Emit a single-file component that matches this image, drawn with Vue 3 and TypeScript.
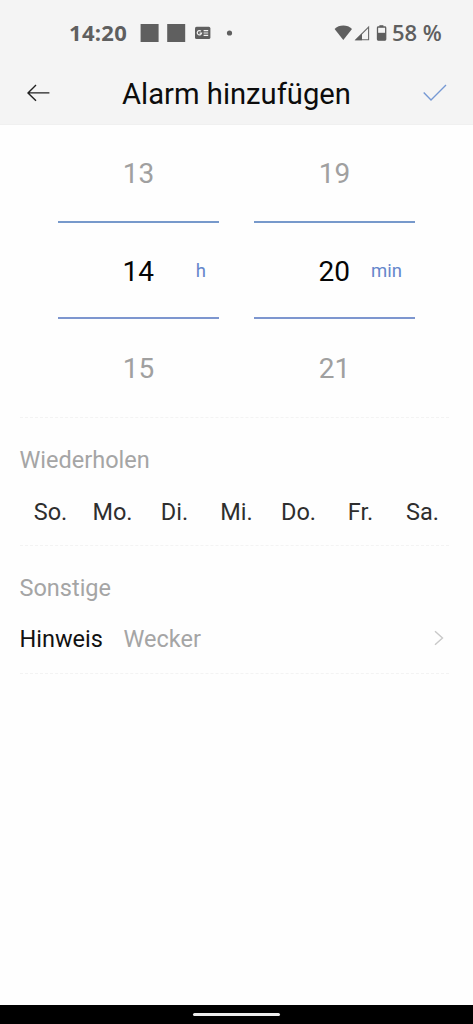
<script setup lang="ts">
interface Wheel {
  before: string
  value: string
  after: string
  unit: string
  id: string
}

const wheels: Wheel[] = [
  { id: 'hours', before: '13', value: '14', after: '15', unit: 'h' },
  { id: 'minutes', before: '19', value: '20', after: '21', unit: 'min' },
]
const days: string[] = ['So.', 'Mo.', 'Di.', 'Mi.', 'Do.', 'Fr.', 'Sa.']
</script>

<template>
  <div class="screen">
    <div class="status">
      <span class="clock">14:20</span>
      <svg class="notices" width="94" height="20" viewBox="0 0 94 20">
        <path d="M0.6 1.9h18v18h-18zM27.2 1.9h18v18h-18z" fill="#5f5f5f" />
        <rect x="55" y="4.8" width="15.4" height="12.2" rx="1.6" fill="#5f5f5f" />
        <path d="M61 9.2a2.2 2.2 0 1 0 .6 2h-2M63.6 8.6h4.6M63.6 11h4.6M63.6 13.4h4.6" fill="none" stroke="#f4f4f4" stroke-width="1.2" />
        <circle cx="89.5" cy="11" r="2.6" fill="#5f5f5f" />
      </svg>
      <svg class="signals" width="54" height="20" viewBox="0 0 54 20">
        <path d="M0.6 7C5 2.4 13.6 2.4 18 7L9.3 18z" fill="#5f5f5f" />
        <path d="M21.8 17.8L34.6 5V17.8z" fill="none" stroke="#6a6a6a" stroke-width="1.1" />
        <path d="M21 18.2L28 11.4V18.2z" fill="#5f5f5f" />
        <path d="M45.4 3.2h4v2h-4z" fill="#5f5f5f" />
        <rect x="43.5" y="5" width="8.2" height="13" rx=".8" fill="none" stroke="#5f5f5f" stroke-width="1.3" />
        <path d="M43.4 10.8h8.4v7.4h-8.4z" fill="#5f5f5f" />
      </svg>
      <span class="charge">58 %</span>
    </div>

    <header class="bar">
      <svg width="24" height="20" viewBox="0 0 24 20">
        <path d="M10 2L2 9.9L10 17.8M2 9.9H23.4" fill="none" stroke="#202020" stroke-width="1.4" />
      </svg>
      <h1>Alarm hinzufügen</h1>
      <svg width="24" height="20" viewBox="0 0 24 20">
        <path d="M.7 9.6L8 17L23 2" fill="none" stroke="#7699d4" stroke-width="1.4" />
      </svg>
    </header>

    <section class="picker">
      <div v-for="wheel in wheels" :key="wheel.id" class="wheel">
        <div class="faded">{{ wheel.before }}</div>
        <div class="selected">
          <span class="value">{{ wheel.value }}</span>
          <span class="unit">{{ wheel.unit }}</span>
        </div>
        <div class="faded last">{{ wheel.after }}</div>
      </div>
    </section>

    <section class="group repeat">
      <h2>Wiederholen</h2>
      <div class="days">
        <span v-for="day in days" :key="day">{{ day }}</span>
      </div>
    </section>

    <section class="group other">
      <h2>Sonstige</h2>
      <div class="note">
        <span class="label">Hinweis</span>
        <span class="text">Wecker</span>
        <svg width="10" height="16" viewBox="0 0 10 16">
          <path d="M1 1.2L8.5 8L1 14.8" fill="none" stroke="#c8c8c8" stroke-width="1.4" />
        </svg>
      </div>
    </section>

    <footer><i class="handle"></i></footer>
  </div>
</template>

<style>
body {
  margin: 0;
}
</style>

<style scoped>
.screen {
  width: 473px;
  height: 1024px;
  display: flex;
  flex-direction: column;
  overflow: hidden;
  background: #fefefe;
  color: #111;
  font-family: Roboto, "Liberation Sans", sans-serif;
}
svg {
  display: block;
  flex: none;
}
h1,
h2 {
  margin: 0;
  font-weight: 400;
}
.status {
  box-sizing: border-box;
  height: 64px;
  padding: 0 31px 0 69px;
  display: flex;
  align-items: center;
  background: #f4f4f4;
  color: #5f5f5f;
  font: 600 22px/62px "Open Sans", "Noto Sans", sans-serif;
  white-space: nowrap;
}
.clock {
  width: 71px;
  font-weight: 700;
  letter-spacing: 0.3px;
}
.signals {
  margin-left: auto;
  margin-right: 4px;
}
.charge {
  width: 50px;
}
.bar {
  box-sizing: border-box;
  height: 61px;
  padding: 0 26px 2px;
  display: flex;
  align-items: center;
  justify-content: space-between;
  background: #f4f4f4;
  border-bottom: 1px solid #f0f0f0;
}
h1 {
  padding-top: 2px;
  font-size: 29.2px;
  line-height: 56px;
  color: #0c0c0c;
  white-space: nowrap;
}
.picker {
  height: 292px;
  padding: 0 58px;
  display: flex;
  justify-content: space-between;
  font-size: 28px;
}
.wheel {
  width: 161px;
}
.faded {
  height: 96px;
  line-height: 97px;
  text-align: center;
  color: #a0a0a0;
}
.last {
  line-height: 100px;
}
.selected {
  box-sizing: border-box;
  height: 98px;
  padding: 2px 13px 0 0;
  display: grid;
  grid-template-columns: 96px 1fr;
  align-items: center;
  border-top: 2px solid #7799cb;
  border-bottom: 2px solid #7d96cf;
  color: #050505;
}
.value {
  text-align: right;
}
.unit {
  font-size: 18.5px;
  color: #6586cb;
  text-align: right;
}
.group {
  margin: 0 24px 0 20px;
  border-top: 1px dashed #f3f3f3;
  font-size: 23.5px;
}
.repeat {
  height: 127px;
}
.other {
  height: 127px;
  border-bottom: 1px dashed #f3f3f3;
}
h2 {
  margin-left: -0.5px;
  padding-top: 21px;
  font-size: 23.5px;
  line-height: 42px;
  color: #a5a5a5;
}
.days {
  display: grid;
  grid-template-columns: repeat(7, 62px);
  margin: 5px -12px 0 -0.5px;
  line-height: 52px;
  color: #2e2e2e;
  text-align: center;
}
.note {
  margin: 4px 5px 0 -0.5px;
  display: flex;
  align-items: center;
  line-height: 52px;
}
.label {
  width: 104px;
  color: #111;
}
.text {
  color: #a5a5a5;
}
.note svg {
  margin-left: auto;
  margin-top: -3px;
}
footer {
  margin-top: auto;
  height: 19px;
  background: #000;
  display: flex;
  align-items: center;
  justify-content: center;
}
.handle {
  width: 87px;
  height: 3px;
  border-radius: 2px;
  background: #eee;
}
</style>
